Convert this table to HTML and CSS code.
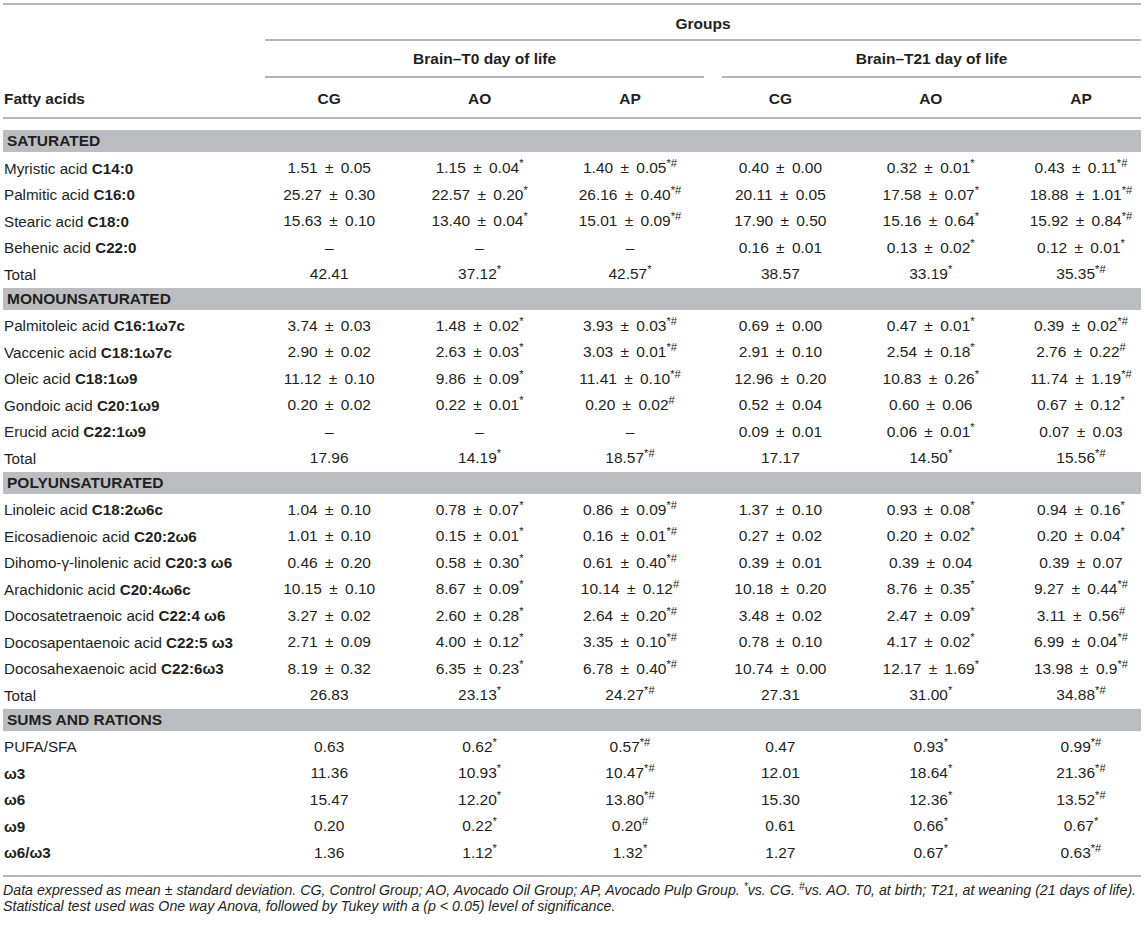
FILE: index.html
```html
<!DOCTYPE html>
<html lang="en">
<head>
<meta charset="utf-8">
<title>Fatty acids table</title>
<link rel="stylesheet" href="styles.css">
</head>
<body>
<div class="table">
  <div class="row hr1"><div class="groups">Groups</div></div>
  <div class="row hr2"><div class="span t0">Brain–T0 day of life</div><div class="span t21">Brain–T21 day of life</div></div>
  <div class="row hr3"><div class="c first">Fatty acids</div><div class="c">CG</div><div class="c">AO</div><div class="c">AP</div><div class="c">CG</div><div class="c">AO</div><div class="c last">AP</div></div>

  <div class="section">
    <div class="band">SATURATED</div>
    <div class="row d"><div class="c first">Myristic acid <b>C14:0</b></div><div class="c">1.51 ± 0.05</div><div class="c">1.15 ± 0.04<sup>*</sup></div><div class="c">1.40 ± 0.05<sup>*#</sup></div><div class="c">0.40 ± 0.00</div><div class="c">0.32 ± 0.01<sup>*</sup></div><div class="c last">0.43 ± 0.11<sup>*#</sup></div></div>
    <div class="row d"><div class="c first">Palmitic acid <b>C16:0</b></div><div class="c">25.27 ± 0.30</div><div class="c">22.57 ± 0.20<sup>*</sup></div><div class="c">26.16 ± 0.40<sup>*#</sup></div><div class="c">20.11 ± 0.05</div><div class="c">17.58 ± 0.07<sup>*</sup></div><div class="c last">18.88 ± 1.01<sup>*#</sup></div></div>
    <div class="row d"><div class="c first">Stearic acid <b>C18:0</b></div><div class="c">15.63 ± 0.10</div><div class="c">13.40 ± 0.04<sup>*</sup></div><div class="c">15.01 ± 0.09<sup>*#</sup></div><div class="c">17.90 ± 0.50</div><div class="c">15.16 ± 0.64<sup>*</sup></div><div class="c last">15.92 ± 0.84<sup>*#</sup></div></div>
    <div class="row d"><div class="c first">Behenic acid <b>C22:0</b></div><div class="c">–</div><div class="c">–</div><div class="c">–</div><div class="c">0.16 ± 0.01</div><div class="c">0.13 ± 0.02<sup>*</sup></div><div class="c last">0.12 ± 0.01<sup>*</sup></div></div>
    <div class="row d"><div class="c first">Total</div><div class="c">42.41</div><div class="c">37.12<sup>*</sup></div><div class="c">42.57<sup>*</sup></div><div class="c">38.57</div><div class="c">33.19<sup>*</sup></div><div class="c last">35.35<sup>*#</sup></div></div>
  </div>

  <div class="section">
    <div class="band">MONOUNSATURATED</div>
    <div class="row d"><div class="c first">Palmitoleic acid <b>C16:1ω7c</b></div><div class="c">3.74 ± 0.03</div><div class="c">1.48 ± 0.02<sup>*</sup></div><div class="c">3.93 ± 0.03<sup>*#</sup></div><div class="c">0.69 ± 0.00</div><div class="c">0.47 ± 0.01<sup>*</sup></div><div class="c last">0.39 ± 0.02<sup>*#</sup></div></div>
    <div class="row d"><div class="c first">Vaccenic acid <b>C18:1ω7c</b></div><div class="c">2.90 ± 0.02</div><div class="c">2.63 ± 0.03<sup>*</sup></div><div class="c">3.03 ± 0.01<sup>*#</sup></div><div class="c">2.91 ± 0.10</div><div class="c">2.54 ± 0.18<sup>*</sup></div><div class="c last">2.76 ± 0.22<sup>#</sup></div></div>
    <div class="row d"><div class="c first">Oleic acid <b>C18:1ω9</b></div><div class="c">11.12 ± 0.10</div><div class="c">9.86 ± 0.09<sup>*</sup></div><div class="c">11.41 ± 0.10<sup>*#</sup></div><div class="c">12.96 ± 0.20</div><div class="c">10.83 ± 0.26<sup>*</sup></div><div class="c last">11.74 ± 1.19<sup>*#</sup></div></div>
    <div class="row d"><div class="c first">Gondoic acid <b>C20:1ω9</b></div><div class="c">0.20 ± 0.02</div><div class="c">0.22 ± 0.01<sup>*</sup></div><div class="c">0.20 ± 0.02<sup>#</sup></div><div class="c">0.52 ± 0.04</div><div class="c">0.60 ± 0.06</div><div class="c last">0.67 ± 0.12<sup>*</sup></div></div>
    <div class="row d"><div class="c first">Erucid acid <b>C22:1ω9</b></div><div class="c">–</div><div class="c">–</div><div class="c">–</div><div class="c">0.09 ± 0.01</div><div class="c">0.06 ± 0.01<sup>*</sup></div><div class="c last">0.07 ± 0.03</div></div>
    <div class="row d"><div class="c first">Total</div><div class="c">17.96</div><div class="c">14.19<sup>*</sup></div><div class="c">18.57<sup>*#</sup></div><div class="c">17.17</div><div class="c">14.50<sup>*</sup></div><div class="c last">15.56<sup>*#</sup></div></div>
  </div>

  <div class="section">
    <div class="band">POLYUNSATURATED</div>
    <div class="row d"><div class="c first">Linoleic acid <b>C18:2ω6c</b></div><div class="c">1.04 ± 0.10</div><div class="c">0.78 ± 0.07<sup>*</sup></div><div class="c">0.86 ± 0.09<sup>*#</sup></div><div class="c">1.37 ± 0.10</div><div class="c">0.93 ± 0.08<sup>*</sup></div><div class="c last">0.94 ± 0.16<sup>*</sup></div></div>
    <div class="row d"><div class="c first">Eicosadienoic acid <b>C20:2ω6</b></div><div class="c">1.01 ± 0.10</div><div class="c">0.15 ± 0.01<sup>*</sup></div><div class="c">0.16 ± 0.01<sup>*#</sup></div><div class="c">0.27 ± 0.02</div><div class="c">0.20 ± 0.02<sup>*</sup></div><div class="c last">0.20 ± 0.04<sup>*</sup></div></div>
    <div class="row d"><div class="c first">Dihomo-γ-linolenic acid <b>C20:3 ω6</b></div><div class="c">0.46 ± 0.20</div><div class="c">0.58 ± 0.30<sup>*</sup></div><div class="c">0.61 ± 0.40<sup>*#</sup></div><div class="c">0.39 ± 0.01</div><div class="c">0.39 ± 0.04</div><div class="c last">0.39 ± 0.07</div></div>
    <div class="row d"><div class="c first">Arachidonic acid <b>C20:4ω6c</b></div><div class="c">10.15 ± 0.10</div><div class="c">8.67 ± 0.09<sup>*</sup></div><div class="c">10.14 ± 0.12<sup>#</sup></div><div class="c">10.18 ± 0.20</div><div class="c">8.76 ± 0.35<sup>*</sup></div><div class="c last">9.27 ± 0.44<sup>*#</sup></div></div>
    <div class="row d"><div class="c first">Docosatetraenoic acid <b>C22:4 ω6</b></div><div class="c">3.27 ± 0.02</div><div class="c">2.60 ± 0.28<sup>*</sup></div><div class="c">2.64 ± 0.20<sup>*#</sup></div><div class="c">3.48 ± 0.02</div><div class="c">2.47 ± 0.09<sup>*</sup></div><div class="c last">3.11 ± 0.56<sup>#</sup></div></div>
    <div class="row d"><div class="c first">Docosapentaenoic acid <b>C22:5 ω3</b></div><div class="c">2.71 ± 0.09</div><div class="c">4.00 ± 0.12<sup>*</sup></div><div class="c">3.35 ± 0.10<sup>*#</sup></div><div class="c">0.78 ± 0.10</div><div class="c">4.17 ± 0.02<sup>*</sup></div><div class="c last">6.99 ± 0.04<sup>*#</sup></div></div>
    <div class="row d"><div class="c first">Docosahexaenoic acid <b>C22:6ω3</b></div><div class="c">8.19 ± 0.32</div><div class="c">6.35 ± 0.23<sup>*</sup></div><div class="c">6.78 ± 0.40<sup>*#</sup></div><div class="c">10.74 ± 0.00</div><div class="c">12.17 ± 1.69<sup>*</sup></div><div class="c last">13.98 ± 0.9<sup>*#</sup></div></div>
    <div class="row d"><div class="c first">Total</div><div class="c">26.83</div><div class="c">23.13<sup>*</sup></div><div class="c">24.27<sup>*#</sup></div><div class="c">27.31</div><div class="c">31.00<sup>*</sup></div><div class="c last">34.88<sup>*#</sup></div></div>
  </div>

  <div class="section lastsec">
    <div class="band">SUMS AND RATIONS</div>
    <div class="row d"><div class="c first">PUFA/SFA</div><div class="c">0.63</div><div class="c">0.62<sup>*</sup></div><div class="c">0.57<sup>*#</sup></div><div class="c">0.47</div><div class="c">0.93<sup>*</sup></div><div class="c last">0.99<sup>*#</sup></div></div>
    <div class="row d"><div class="c first"><b>ω3</b></div><div class="c">11.36</div><div class="c">10.93<sup>*</sup></div><div class="c">10.47<sup>*#</sup></div><div class="c">12.01</div><div class="c">18.64<sup>*</sup></div><div class="c last">21.36<sup>*#</sup></div></div>
    <div class="row d"><div class="c first"><b>ω6</b></div><div class="c">15.47</div><div class="c">12.20<sup>*</sup></div><div class="c">13.80<sup>*#</sup></div><div class="c">15.30</div><div class="c">12.36<sup>*</sup></div><div class="c last">13.52<sup>*#</sup></div></div>
    <div class="row d"><div class="c first"><b>ω9</b></div><div class="c">0.20</div><div class="c">0.22<sup>*</sup></div><div class="c">0.20<sup>#</sup></div><div class="c">0.61</div><div class="c">0.66<sup>*</sup></div><div class="c last">0.67<sup>*</sup></div></div>
    <div class="row d"><div class="c first"><b>ω6/ω3</b></div><div class="c">1.36</div><div class="c">1.12<sup>*</sup></div><div class="c">1.32<sup>*</sup></div><div class="c">1.27</div><div class="c">0.67<sup>*</sup></div><div class="c last">0.63<sup>*#</sup></div></div>
  </div>
</div>
<p class="note">Data expressed as mean ± standard deviation. CG, Control Group; AO, Avocado Oil Group; AP, Avocado Pulp Group. <sup>*</sup>vs. CG. <sup>#</sup>vs. AO. T0, at birth; T21, at weaning (21 days of life).<br>Statistical test used was One way Anova, followed by Tukey with a (p &lt; 0.05) level of significance.</p>
</body>
</html>
```

FILE: styles.css
```css
html, body {
  margin: 0;
  padding: 0;
  background: #ffffff;
}

body {
  font-family: "Liberation Sans", Arial, sans-serif;
  color: #231f20;
  font-size: 15.5px;
}

.table {
  width: 1138px;
  margin: 3px 0 0 3px;
  border-top: 2px solid #b4b4b4;
  border-bottom: 2px solid #b4b4b4;
}

.row {
  display: grid;
  grid-template-columns: 251px repeat(5, 150.4px) 1fr;
  align-items: center;
}

.c {
  text-align: center;
  white-space: nowrap;
  word-spacing: 3px;
}

.c.first {
  text-align: left;
  padding-left: 1px;
  word-spacing: 0;
  font-size: 15.2px;
}

.c.last {
  padding-left: 15px;
}

.hr1 {
  height: 36px;
  align-items: stretch;
}

.groups {
  grid-column: 2 / -1;
  margin-left: 11px;
  border-bottom: 2px solid #b4b4b4;
  display: flex;
  align-items: center;
  justify-content: center;
  font-weight: bold;
  padding-top: 3px;
}

.hr2 {
  height: 37px;
  align-items: stretch;
}

.span {
  grid-column: span 3;
  border-bottom: 2px solid #b4b4b4;
  display: flex;
  align-items: center;
  justify-content: center;
  font-weight: bold;
  padding-top: 1px;
}

.t0 {
  grid-column: 2 / span 3;
  margin-left: 11px;
  margin-right: 1px;
}

.t21 {
  grid-column: 5 / span 3;
  margin-left: 17px;
}

.hr3 {
  height: 41px;
  border-bottom: 2px solid #b4b4b4;
  box-sizing: border-box;
  font-weight: bold;
  padding-top: 2px;
}

.hr3 .c.first {
  font-size: 15.5px;
}

.hr3 + .section {
  margin-top: 11px;
}

.band {
  height: 22px;
  background: #bcbdc0;
  font-weight: bold;
  display: flex;
  align-items: center;
  padding-left: 4px;
  margin-bottom: 3px;
}

.row.d {
  height: 26.5px;
}

.lastsec {
  padding-bottom: 9px;
}

sup {
  font-size: 0.72em;
  line-height: 0;
  vertical-align: 0.5em;
}

.note {
  margin: 5px 0 0 3px;
  width: 1140px;
  font-style: italic;
  font-size: 14.2px;
  line-height: 16px;
  color: #231f20;
  white-space: nowrap;
}
```
